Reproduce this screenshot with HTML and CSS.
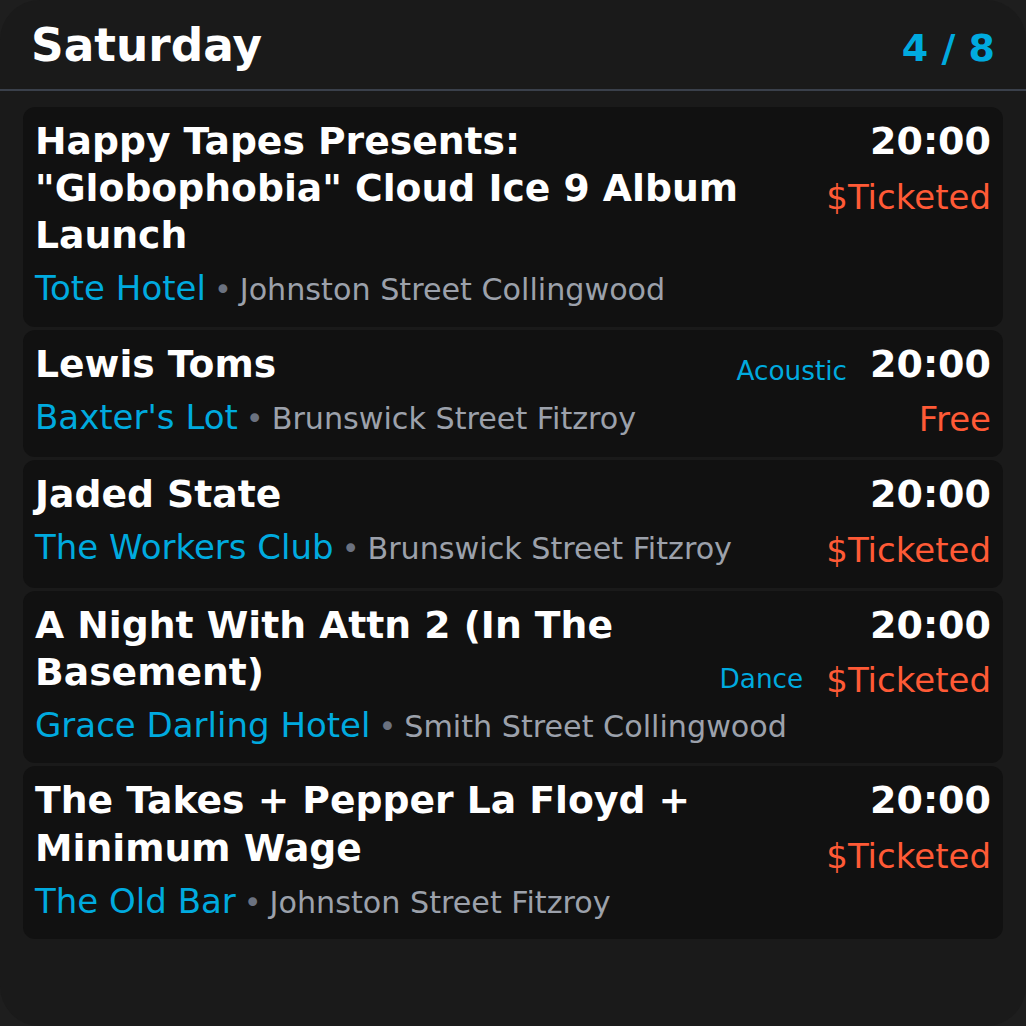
FILE: index.html
```html
<!DOCTYPE html>
<html>
<head>
<meta charset="utf-8">
<link rel="stylesheet" href="styles.css">
</head>
<body>
<div class="screen">
  <div class="header">
    <div class="day">Saturday</div>
    <div class="count">4 / 8</div>
  </div>
  <div class="list">
    <div class="card">
      <div class="left">
        <div class="title-row">
          <div class="title">Happy Tapes Presents: "Globophobia" Cloud Ice 9 Album Launch</div>
        </div>
        <div class="venue-line"><span class="venue">Tote Hotel</span><span class="dot">•</span><span class="addr">Johnston Street Collingwood</span></div>
      </div>
      <div class="right">
        <div class="time">20:00</div>
        <div class="price">$Ticketed</div>
      </div>
    </div>
    <div class="card">
      <div class="left">
        <div class="title-row">
          <div class="title">Lewis Toms</div>
          <div class="tag">Acoustic</div>
        </div>
        <div class="venue-line"><span class="venue">Baxter's Lot</span><span class="dot">•</span><span class="addr">Brunswick Street Fitzroy</span></div>
      </div>
      <div class="right">
        <div class="time">20:00</div>
        <div class="price">Free</div>
      </div>
    </div>
    <div class="card">
      <div class="left">
        <div class="title-row">
          <div class="title">Jaded State</div>
        </div>
        <div class="venue-line"><span class="venue">The Workers Club</span><span class="dot">•</span><span class="addr">Brunswick Street Fitzroy</span></div>
      </div>
      <div class="right">
        <div class="time">20:00</div>
        <div class="price">$Ticketed</div>
      </div>
    </div>
    <div class="card">
      <div class="left">
        <div class="title-row">
          <div class="title">A Night With Attn 2 (In The Basement)</div>
          <div class="tag">Dance</div>
        </div>
        <div class="venue-line"><span class="venue">Grace Darling Hotel</span><span class="dot">•</span><span class="addr">Smith Street Collingwood</span></div>
      </div>
      <div class="right">
        <div class="time">20:00</div>
        <div class="price">$Ticketed</div>
      </div>
    </div>
    <div class="card">
      <div class="left">
        <div class="title-row">
          <div class="title">The Takes + Pepper La Floyd + Minimum Wage</div>
        </div>
        <div class="venue-line"><span class="venue">The Old Bar</span><span class="dot">•</span><span class="addr">Johnston Street Fitzroy</span></div>
      </div>
      <div class="right">
        <div class="time">20:00</div>
        <div class="price">$Ticketed</div>
      </div>
    </div>
  </div>
</div>
</body>
</html>
```
FILE: styles.css
```css
* { box-sizing: border-box; }
html, body {
  margin: 0;
  padding: 0;
  background: #1e1e1e;
}
body {
  font-family: "DejaVu Sans", Verdana, sans-serif;
}
.screen {
  width: 1026px;
  height: 1026px;
  background: #1a1a1a;
  border-radius: 40px;
  overflow: hidden;
}
.header {
  height: 91px;
  display: flex;
  justify-content: space-between;
  align-items: baseline;
  padding: 16px 31px 0 31px;
  border-bottom: 2px solid #3a404b;
}
.day {
  font-size: 45.4px;
  font-weight: bold;
  line-height: 1.3;
  color: #ffffff;
}
.count {
  font-size: 38px;
  font-weight: bold;
  line-height: 1.3;
  color: #00aadf;
}
.list {
  padding: 16px 23px;
  display: flex;
  flex-direction: column;
  gap: 3px;
}
.card {
  background: #111111;
  border-radius: 12px;
  padding: 11px 12px 16px 12px;
  display: flex;
  gap: 23px;
}
.left {
  flex: 1;
  min-width: 0;
}
.title-row {
  display: flex;
  align-items: flex-end;
  gap: 20px;
}
.title {
  flex: 1;
  font-size: 37.7px;
  font-weight: bold;
  line-height: 1.25;
  color: #ffffff;
}
.tag {
  font-size: 26.3px;
  line-height: 1.3;
  color: #00aadf;
  white-space: nowrap;
}
.venue-line {
  margin-top: 7px;
  font-size: 34px;
  line-height: 1.3;
  white-space: nowrap;
}
.venue { color: #00aadf; }
.dot {
  color: #6b7280;
  font-size: 30.2px;
  margin: 0 8px 0 8px;
}
.addr { color: #9ca1ab; font-size: 30.2px; }
.right {
  display: flex;
  flex-direction: column;
  align-items: flex-end;
  white-space: nowrap;
}
.time {
  font-size: 38px;
  font-weight: bold;
  line-height: 1.25;
  color: #ffffff;
}
.price {
  margin-top: 9px;
  font-size: 34px;
  line-height: 1.3;
  color: #ff5a36;
}
```
